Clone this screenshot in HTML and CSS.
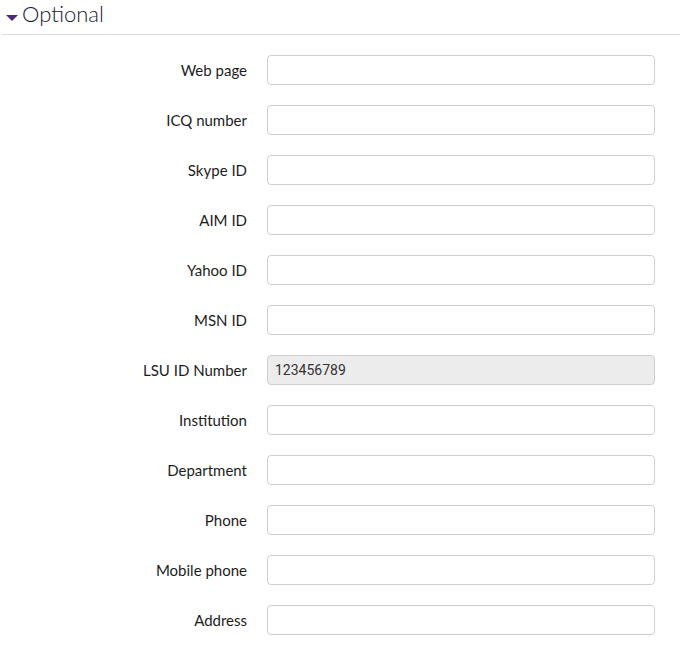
FILE: index.html
```html
<!DOCTYPE html>
<html>
<head>
<meta charset="utf-8">
<link rel="stylesheet" href="styles.css">
</head>
<body>
<div class="section">
  <div class="legend"><span class="caret"></span><span class="legend-text">Optional</span></div>
  <div class="rows">
    <div class="row"><label class="lbl">Web page</label><input class="field" type="text"></div>
    <div class="row"><label class="lbl">ICQ number</label><input class="field" type="text"></div>
    <div class="row"><label class="lbl">Skype ID</label><input class="field" type="text"></div>
    <div class="row"><label class="lbl">AIM ID</label><input class="field" type="text"></div>
    <div class="row"><label class="lbl">Yahoo ID</label><input class="field" type="text"></div>
    <div class="row"><label class="lbl">MSN ID</label><input class="field" type="text"></div>
    <div class="row"><label class="lbl">LSU ID Number</label><input class="field disabled" type="text" value="123456789" disabled></div>
    <div class="row"><label class="lbl">Institution</label><input class="field" type="text"></div>
    <div class="row"><label class="lbl">Department</label><input class="field" type="text"></div>
    <div class="row"><label class="lbl">Phone</label><input class="field" type="text"></div>
    <div class="row"><label class="lbl">Mobile phone</label><input class="field" type="text"></div>
    <div class="row"><label class="lbl">Address</label><input class="field" type="text"></div>
  </div>
</div>
</body>
</html>
```
FILE: styles.css
```css
html, body {
  margin: 0;
  padding: 0;
  background: #fff;
}
body {
  font-family: Lato, "Open Sans", sans-serif;
  color: #1a1a1a;
}
.section {
  width: 680px;
}
.legend {
  display: flex;
  align-items: center;
  height: 35px;
  margin-left: 2px;
  border-bottom: 1px solid #dedede;
  padding-left: 4px;
  box-sizing: border-box;
}
.caret {
  width: 0;
  height: 0;
  border-left: 6px solid transparent;
  border-right: 6px solid transparent;
  border-top: 6px solid #4b2a7a;
  margin-right: 4px;
  margin-top: 1px;
}
.legend-text {
  font-family: Lato, sans-serif;
  font-weight: 300;
  font-size: 22px;
  color: #1a1a2e;
  line-height: 28px;
  margin-top: -6px;
}
.rows {
  display: flex;
  flex-direction: column;
  gap: 20px;
  padding-top: 20px;
}
.row {
  display: grid;
  grid-template-columns: 247px 388px;
  column-gap: 20px;
  align-items: center;
  height: 30px;
}
.lbl {
  text-align: right;
  font-size: 15px;
  color: #1d1d1d;
}
.field {
  box-sizing: border-box;
  width: 388px;
  height: 30px;
  border: 1px solid #cfcfcf;
  border-radius: 4px;
  background: #fff;
  padding: 0 7px;
  font-family: Roboto, "Liberation Sans", sans-serif;
  font-size: 14px;
  color: #333;
  margin: 0;
  outline: none;
}
.field.disabled {
  background: #ececec;
  color: #333;
}
```
